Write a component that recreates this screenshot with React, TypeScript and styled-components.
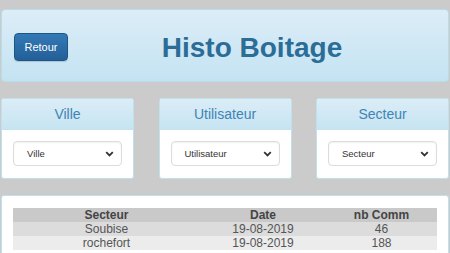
import styled, { createGlobalStyle } from "styled-components";

const GlobalStyle = createGlobalStyle`
    html, body {
        margin: 0;
        padding: 0;
        background: #cbcbcb;
        font-family: "Liberation Sans", Arial, sans-serif;
        overflow: hidden;
    }
`;

const Page = styled.div`
    padding: 9px 1px 0 1px;
    display: flex;
    flex-direction: column;
    gap: 16px;
`;

const Header = styled.div`
    height: 71px;
    display: flex; align-items: center;
    padding: 0 12px;
    border: 1px solid #b9dcea;
    border-radius: 4px;
    background: linear-gradient(to bottom, #dcedf7, #c4e3f2);
`;

const BackButton = styled.button`
    width: 54px; height: 28px;
    margin-top: 3px;
    border: 1px solid #1d5586;
    border-radius: 4px;
    background: linear-gradient(to bottom, #3379b6, #235f98);
    color: #fff;
    font-family: "Liberation Sans", Arial, sans-serif;
    font-size: 11px;
    box-shadow: 0 1px 1px rgba(0,0,0,.15);
    padding: 0;
`;

const Title = styled.h1`
    flex: 1;
    margin: 4px 0 0 0;
    text-align: center;
    font-size: 28px;
    font-weight: bold;
    color: #2b6d97;
`;

const Filters = styled.div`
    display: flex;
    justify-content: space-between;
`;

const Card = styled.div`
    width: 131px;
    border: 1px solid #bfe1ee;
    border-radius: 3px;
    background: #fff;
    overflow: hidden;
`;

const CardHeader = styled.div`
    height: 30px;
    display: flex; align-items: center; justify-content: center;
    background: linear-gradient(to bottom, #dbedf7, #c6e4f2);
    border-bottom: 1px solid #c6e2ee;
    color: #3f84b4;
    font-size: 14px;
`;

const CardBody = styled.div`
    padding: 11px 11px 12px 11px;
`;

const Select = styled.div`
    height: 23px;
    display: flex; align-items: center; justify-content: space-between;
    padding: 0 7px 0 13px;
    border: 1px solid #dcdcdc;
    border-radius: 4px;
    box-shadow: inset 0 1px 2px rgba(0,0,0,.06);
    color: #333;
    font-size: 9.5px;
`;

const TablePanel = styled.div`
    height: 60px;
    padding: 12px 11px 0 11px;
    border: 1px solid #bfe1ee;
    border-bottom: none;
    border-radius: 3px 3px 0 0;
    background: #fff;
`;

const Table = styled.table`
    width: 424px;
    border-collapse: collapse;
    font-size: 12px;
    color: #555;
    text-align: center;
`;

const Th = styled.th<{ $w: number }>`
    width: ${p => p.$w}px;
    height: 14px;
    padding: 0;
    background: #c9c9c9;
    color: #444;
    font-weight: bold;
    line-height: 14px;
`;

const Row = styled.tr<{ $odd: boolean }>`
    background: ${p => (p.$odd ? "#dcdcdc" : "#ececec")};
`;

const Td = styled.td`
    height: 14px;
    padding: 0;
    line-height: 14px;
`;

const Chevron = () => (
    <svg width="9" height="6" viewBox="0 0 9 6">
        <path d="M1.2 1.2 L4.5 4.5 L7.8 1.2" fill="none" stroke="#333" strokeWidth="1.8" />
    </svg>
);

const filters = ["Ville", "Utilisateur", "Secteur"];

const rows = [
    { secteur: "Soubise", date: "19-08-2019", nb: 46 },
    { secteur: "rochefort", date: "19-08-2019", nb: 188 },
];

function App() {
    return (
        <Page>
            <GlobalStyle />
            <Header>
                <BackButton>Retour</BackButton>
                <Title>Histo Boitage</Title>
            </Header>
            <Filters>
                {filters.map((f) => (
                    <Card key={f}>
                        <CardHeader>{f}</CardHeader>
                        <CardBody>
                            <Select>
                                <span>{f}</span>
                                <Chevron />
                            </Select>
                        </CardBody>
                    </Card>
                ))}
            </Filters>
            <TablePanel>
                <Table>
                    <thead>
                        <tr>
                            <Th $w={187}>Secteur</Th>
                            <Th $w={126}>Date</Th>
                            <Th $w={111}>nb Comm</Th>
                        </tr>
                    </thead>
                    <tbody>
                        {rows.map((r, i) => (
                            <Row key={r.secteur} $odd={i % 2 === 0}>
                                <Td>{r.secteur}</Td>
                                <Td>{r.date}</Td>
                                <Td>{r.nb}</Td>
                            </Row>
                        ))}
                    </tbody>
                </Table>
            </TablePanel>
        </Page>
    );
}

export default App;
